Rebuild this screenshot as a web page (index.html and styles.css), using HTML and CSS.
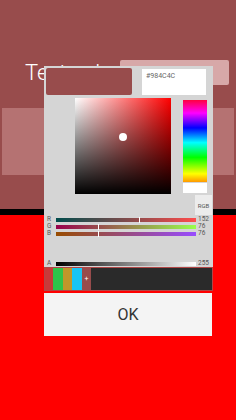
FILE: index.html
```html
<!DOCTYPE html>
<html>
<head>
<meta charset="utf-8">
<link rel="stylesheet" href="styles.css">
</head>
<body>
<div class="screen">
  <div class="top">
    <div class="field-row">
      <span class="label">Text color</span>
      <div class="input"></div>
    </div>
    <div class="band-light"></div>
  </div>
  <div class="band-black"></div>
  <div class="bottom"></div>

  <div class="dialog">
    <div class="panel">
      <div class="head">
        <div class="preview"></div>
        <div class="hex">#984C4C</div>
      </div>
      <div class="picker">
        <div class="sv">
          <div class="sv-marker"></div>
        </div>
        <div class="side">
          <div class="hue"></div>
          <div class="alpha-box"></div>
        </div>
      </div>
      <div class="mode-row">
        <div class="mode">RGB</div>
      </div>
      <div class="sliders">
        <div class="srow">
          <span class="slabel">R</span>
          <div class="track track-r"><span class="thumb" style="left:59.6%"></span></div>
          <span class="sval">152</span>
        </div>
        <div class="srow">
          <span class="slabel">G</span>
          <div class="track track-g"><span class="thumb" style="left:29.8%"></span></div>
          <span class="sval">76</span>
        </div>
        <div class="srow">
          <span class="slabel">B</span>
          <div class="track track-b"><span class="thumb" style="left:29.8%"></span></div>
          <span class="sval">76</span>
        </div>
        <div class="srow srow-a">
          <span class="slabel">A</span>
          <div class="track track-a"></div>
          <span class="sval">255</span>
        </div>
      </div>
      <div class="swatches">
        <div class="sw sw1"></div>
        <div class="sw sw2"></div>
        <div class="sw sw3"></div>
        <div class="sw sw4"></div>
        <div class="sw sw5">+</div>
      </div>
    </div>
    <button class="ok">OK</button>
  </div>
</div>
</body>
</html>
```
FILE: styles.css
```css
* { box-sizing: border-box; }
html, body {
  margin: 0;
  padding: 0;
}
body {
  width: 236px;
  height: 420px;
  overflow: hidden;
  font-family: Roboto, "Liberation Sans", sans-serif;
}
.screen {
  position: relative;
  width: 236px;
  height: 420px;
  display: flex;
  flex-direction: column;
}
.top {
  height: 209px;
  background: #984c4c;
  padding-top: 60px;
}
.field-row {
  display: flex;
  align-items: flex-start;
  height: 25px;
}
.label {
  margin-left: 25px;
  font-size: 22px;
  font-weight: 300;
  color: #ffffff;
  white-space: nowrap;
  line-height: normal;
}
.input {
  margin-left: auto;
  margin-right: 7px;
  width: 110px;
  height: 25px;
  background: #d7a8a8;
  border-radius: 2px;
}
.band-light {
  margin: 23px 2px 0 2px;
  height: 67px;
  background: #b57272;
}
.band-black {
  height: 6px;
  background: #000;
}
.bottom {
  flex: 1;
  background: #ff0000;
}

.dialog {
  position: absolute;
  left: 44px;
  top: 66px;
  width: 169px;
  display: flex;
  flex-direction: column;
}
.panel {
  height: 225px;
  background: #d5d5d5;
  display: flex;
  flex-direction: column;
}
.head {
  display: flex;
  margin-top: 2px;
  height: 27px;
}
.preview {
  margin-left: 2px;
  width: 86px;
  height: 27px;
  background: #984c4c;
  border-radius: 2px;
}
.hex {
  margin-left: 10px;
  margin-top: 1px;
  width: 64px;
  height: 26px;
  background: #ffffff;
  font-size: 7px;
  color: #666;
  padding: 3px 0 0 4px;
  line-height: 8px;
}
.picker {
  display: flex;
  margin-top: 3px;
  height: 96px;
}
.sv {
  position: relative;
  margin-left: 31px;
  width: 96px;
  height: 96px;
  background:
    linear-gradient(to top, #000 0%, rgba(0,0,0,0) 100%),
    linear-gradient(to right, #ffffff 0%, #ff0000 100%);
}
.sv-marker {
  position: absolute;
  left: 44px;
  top: 35px;
  width: 8px;
  height: 8px;
  border-radius: 50%;
  background: #ffffff;
}
.side {
  margin-left: 12px;
  display: flex;
  flex-direction: column;
}
.hue {
  margin-top: 2px;
  width: 24px;
  height: 82px;
  background: linear-gradient(to bottom,
    #ff0040 0%, #ff00ff 16%, #0000ff 34%, #00ffff 52%,
    #00ff00 70%, #ffff00 90%, #ff9900 100%);
}
.alpha-box {
  margin-top: 1px;
  width: 24px;
  height: 10px;
  background: #ffffff;
}
.mode-row {
  display: flex;
  justify-content: flex-end;
  margin-top: 1px;
  padding-right: 1px;
}
.mode {
  width: 17px;
  height: 20px;
  background: #ececec;
  font-size: 6px;
  color: #555;
  display: flex;
  align-items: center;
  justify-content: center;
}
.sliders {
  margin-top: 1px;
  display: flex;
  flex-direction: column;
}
.srow {
  display: flex;
  align-items: center;
  height: 7px;
}
.srow-a {
  margin-top: 23px;
}
.slabel {
  width: 12px;
  padding-left: 3px;
  font-size: 6.5px;
  color: #555;
  line-height: 7px;
}
.track {
  position: relative;
  width: 140px;
  height: 4px;
}
.track-r { background: linear-gradient(to right, #004c4c, #ff4c4c); }
.track-g { background: linear-gradient(to right, #98004c, #98ff4c); }
.track-b { background: linear-gradient(to right, #984c00, #984cff); }
.track-a { background: linear-gradient(to right, #000000, #ffffff); }
.thumb {
  position: absolute;
  top: -1px;
  width: 1px;
  height: 6px;
  background: #ffffff;
}
.sval {
  margin-left: 2px;
  font-size: 6.5px;
  color: #555;
  line-height: 7px;
}
.swatches {
  margin-top: 0;
  margin-left: 0;
  width: 169px;
  height: 24px;
  background: #2a2a2a;
  border: 1px solid #b04646;
  display: flex;
}
.sw { height: 100%; }
.sw1 { width: 8px; background: #c83a3a; }
.sw2 { width: 10px; background: #2ec44a; }
.sw3 { width: 9px; background: #c0962a; }
.sw4 { width: 10px; background: #17c5f5; }
.sw5 {
  width: 9px;
  background: #984c4c;
  color: #fff;
  font-size: 7px;
  display: flex;
  align-items: center;
  justify-content: center;
}
.ok {
  margin-top: 2px;
  width: 168px;
  height: 43px;
  border: none;
  background: #f4f4f4;
  font-family: Roboto, "Liberation Sans", sans-serif;
  font-size: 16px;
  color: #333;
  padding: 0;
}
```
